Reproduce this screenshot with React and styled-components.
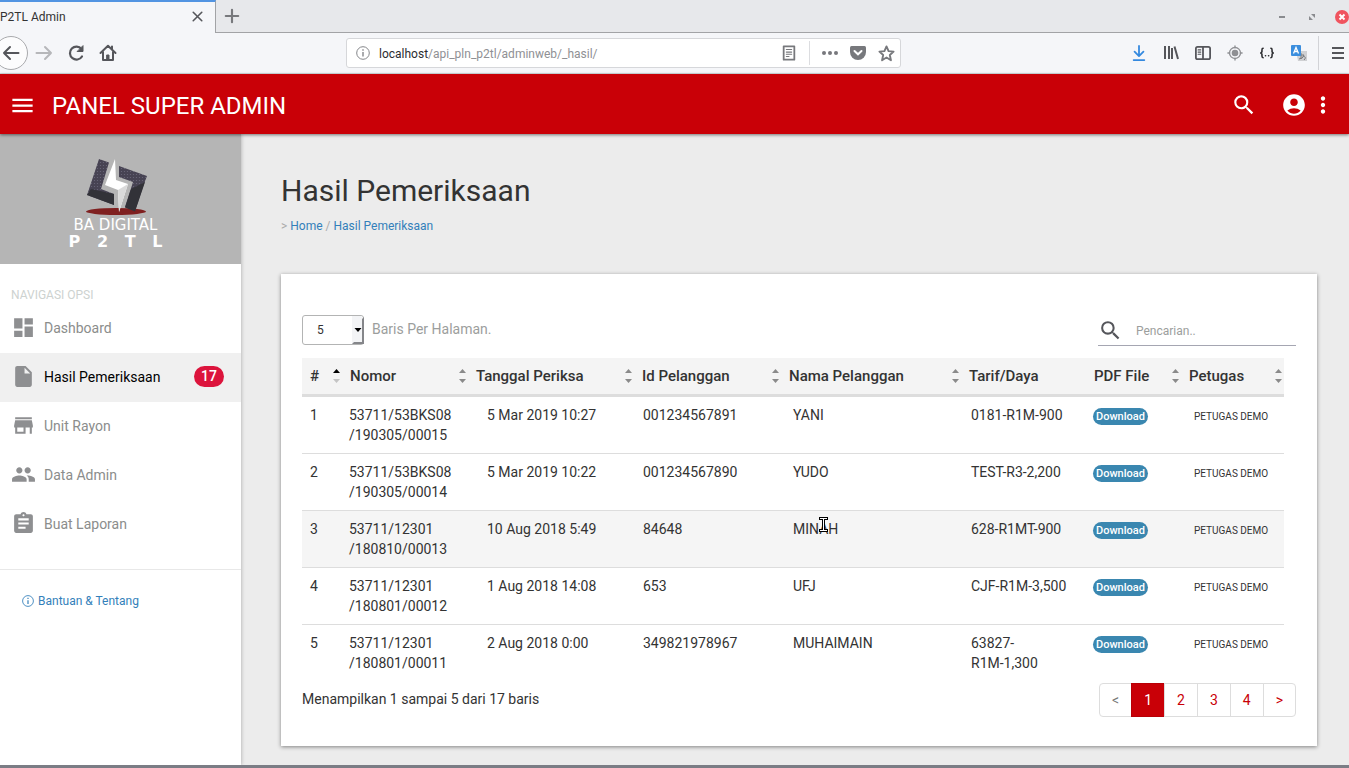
import React from "react";
import styled, { createGlobalStyle } from "styled-components";
import {
  MdMenu,
  MdSearch,
  MdAccountCircle,
  MdMoreVert,
  MdDashboard,
  MdInsertDriveFile,
  MdStore,
  MdPeople,
  MdAssignment,
} from "react-icons/md";

const GlobalStyle = createGlobalStyle`
  *, *::before, *::after { box-sizing: border-box; }
  body {
    margin: 0;
    font-family: Roboto, "Liberation Sans", sans-serif;
    font-size: 14px;
    line-height: 20px;
    color: #333;
    background: #ececec;
  }
  button, input, select { font: inherit; color: inherit; }
  a { color: #337fba; text-decoration: none; }
`;

const Page = styled.div`
  min-height: 100vh;
  display: flex;
  flex-direction: column;
  border-bottom: 3px solid #7b7d85;
  overflow: hidden;
`;

/* ---------- browser window ---------- */

const TabStrip = styled.div`
  display: flex;
  height: 33px;
  background: #e7e8eb;
`;

const Tab = styled.div`
  width: 216px;
  display: flex;
  align-items: center;
  justify-content: space-between;
  padding: 0 9px 2px 0;
  font-size: 12px;
  background: #f5f6f9;
  border-top: 2px solid #5294e2;
  border-right: 1px solid #a2a3a6;
`;

const TabRest = styled.div`
  flex: 1;
  display: flex;
  justify-content: space-between;
  align-items: center;
  border-bottom: 1px solid #a2a3a6;
`;

const WindowButtons = styled.div`
  display: flex;
  align-items: center;
  padding-top: 2px;
`;

const IconButton = styled.button`
  display: flex;
  align-items: center;
  justify-content: center;
  flex: none;
  width: ${(p) => p.$w || 32}px;
  height: ${(p) => p.$h || 32}px;
  padding: 0;
  border: 0;
  background: none;
  color: ${(p) => p.$color || "#55565b"};
  svg { flex: none; }
`;

const CloseWindowButton = styled(IconButton)`
  width: 22px;
  justify-content: flex-end;
`;

const Toolbar = styled.div`
  display: grid;
  grid-template-columns: 346fr 555fr 448fr;
  align-items: center;
  height: 41px;
  background: #f5f6f9;
  border-bottom: 1px solid #d5dde0;
`;

const NavTools = styled.div`
  display: flex;
  align-items: center;
`;

const BackButton = styled(IconButton)`
  width: 34px;
  height: 34px;
  margin-left: -6px;
  border: 1px solid #a9aaad;
  border-radius: 50%;
  background: #fcfcfd;
`;

const ExtraTools = styled.div`
  display: flex;
  align-items: center;
  justify-content: flex-end;
`;

const MenuSlot = styled.div`
  margin-left: 3px;
  padding-left: 7px;
  border-left: 1px solid #d2d3d7;
`;

const UrlBar = styled.div`
  display: flex;
  align-items: center;
  height: 30px;
  background: #fff;
  border: 1px solid #d6d7da;
  border-radius: 3px;
`;

const Address = styled.div`
  flex: 1;
  padding-top: 2px;
  font-size: 12px;
  color: #8f9094;
  strong { font-weight: 400; color: #2b2c30; }
`;

const BarDivider = styled.span`
  width: 1px;
  height: 24px;
  margin: 0 6px 0 5px;
  background: #dcdde0;
`;

/* ---------- application ---------- */

const AppBar = styled.header`
  position: relative;
  z-index: 2;
  display: flex;
  align-items: center;
  height: 60px;
  padding: 2px 16px 0 8px;
  background: #c90007;
  color: #fff;
  box-shadow: 0 1px 3px rgba(0, 0, 0, 0.5);
`;

const AppTitle = styled.div`
  flex: 1;
  margin-left: 16px;
  font-size: 24px;
  line-height: 32px;
  padding-top: 2px;
`;

const Body = styled.div`
  flex: 1;
  display: flex;
`;

const Sidebar = styled.aside`
  width: 241px;
  flex: none;
  background: #fff;
  box-shadow: 0 0 4px rgba(0, 0, 0, 0.3);
`;

const Brand = styled.div`
  display: flex;
  flex-direction: column;
  align-items: center;
  height: 130px;
  padding: 24px 10px 0 0;
  background: #b5b5b5;
  color: #fff;
  svg { display: block; }
`;

const BrandName = styled.div`
  font-family: "DejaVu Sans", sans-serif;
  font-size: 15px;
  line-height: 16px;
`;

const BrandCode = styled.div`
  display: flex;
  justify-content: space-between;
  width: 94px;
  font-family: "DejaVu Sans", sans-serif;
  font-size: 16px;
  font-weight: 700;
  line-height: 18px;
`;

const NavTitle = styled.h2`
  margin: 0;
  padding: 21px 11px 0;
  height: 40px;
  font-size: 12px;
  font-weight: 400;
  line-height: 20px;
  color: #cdd2d0;
`;

const NavList = styled.ul`
  list-style: none;
  margin: 0;
  padding: 0 0 20px;
  border-bottom: 1px solid #e8e8e8;
`;

const NavLink = styled.a`
  display: flex;
  align-items: center;
  height: 49px;
  padding: 0 17px 2px 11px;
  font-size: 14px;
  color: ${(p) => (p.$active ? "#000" : "#8b8d8c")};
  background: ${(p) => (p.$active ? "#f0f0f0" : "transparent")};
  svg { color: #8e8f91; margin-right: 8px; }
`;

const Badge = styled.span`
  margin-left: auto;
  padding: 0 7px;
  border-radius: 11px;
  background: #dc143c;
  color: #fff;
  font-size: 14px;
  font-weight: 500;
  line-height: 21px;
`;

const HelpLink = styled.a`
  display: flex;
  align-items: center;
  gap: 4px;
  padding: 21px 22px;
  font-size: 12px;
`;

const Main = styled.main`
  flex: 1;
  min-width: 0;
  padding: 37px 32px 19px 40px;
`;

const PageTitle = styled.h1`
  margin: 0 0 10px;
  font-size: 30px;
  font-weight: 400;
  line-height: 40px;
`;

const Crumbs = styled.nav`
  margin-bottom: 43px;
  font-size: 12px;
  line-height: 10px;
  color: #aaa;
`;

const Card = styled.section`
  padding: 41px 21px 29px;
  background: #fff;
  box-shadow: 0 1px 4px rgba(0, 0, 0, 0.45);
`;

const Controls = styled.div`
  display: flex;
  justify-content: space-between;
  height: 31px;
  margin-bottom: 12px;
`;

const LengthLabel = styled.label`
  display: flex;
  gap: 8px;
  line-height: 28px;
  color: #9c9e9d;
`;

const SelectBox = styled.span`
  position: relative;
  width: 62px;
  height: 30px;
  svg {
    position: absolute;
    top: 1px;
    right: 0;
    pointer-events: none;
  }
`;

const Select = styled.select`
  appearance: none;
  width: 100%;
  height: 100%;
  padding: 0 14px;
  border: 1px solid #b3b4b4;
  border-radius: 3px;
  background: #fff;
  font-size: 12px;
  color: #333;
`;

const SearchLabel = styled.label`
  display: flex;
  align-items: center;
  width: 198px;
  border-bottom: 1px solid #a5a6b2;
  color: #55565b;
  svg { flex: none; }
`;

const SearchInput = styled.input`
  min-width: 0;
  flex: 1;
  margin-left: 13px;
  padding: 2px 0 0;
  border: 0;
  outline: 0;
  background: none;
  font-size: 12px;
  &::placeholder { color: #9c9e9d; opacity: 1; }
`;

const TableWrap = styled.div`
  padding-right: 12px;
`;

const Table = styled.table`
  width: 100%;
  table-layout: fixed;
  border-collapse: separate;
  border-spacing: 0;
`;

const HeadCell = styled.th`
  padding: 0;
  background: #f4f4f4;
  border-bottom: 2px solid #ddd;
`;

const SortButton = styled.button`
  display: flex;
  align-items: center;
  justify-content: space-between;
  width: 100%;
  height: 36px;
  padding: 0 2px 0 8px;
  border: 0;
  background: none;
  font-size: 15px;
  font-weight: 500;
  white-space: nowrap;
`;

const Row = styled.tr`
  background: ${(p) => (p.$hover ? "#f5f5f5" : "transparent")};
`;

const Cell = styled.td`
  position: relative;
  height: 57px;
  padding: 8px 8px 8px ${(p) => p.$inset}px;
  border-top: 1px solid #ddd;
  vertical-align: top;
  white-space: pre-line;
`;

const Officer = styled.span`
  font-size: 10px;
  white-space: nowrap;
`;

const Download = styled.a`
  display: inline-block;
  margin-top: 3px;
  padding: 0 3px;
  border-radius: 9px;
  background: #3a87b0;
  color: #fff;
  font-size: 11px;
  font-weight: 500;
  line-height: 17px;
`;

const Pointer = styled.svg`
  position: absolute;
  left: 38px;
  top: 5px;
`;

const CardFooter = styled.div`
  display: flex;
  justify-content: space-between;
  margin-top: 2px;
  line-height: 32px;
`;

const Pagination = styled.nav`
  display: flex;
`;

const PageLink = styled.a`
  height: 34px;
  margin-left: -1px;
  padding: 6px 12px;
  line-height: 20px;
  background: ${(p) => (p.$active ? "#c90007" : "#fff")};
  border: 1px solid ${(p) => (p.$active ? "#b80006" : "#ddd")};
  color: ${(p) => (p.$active ? "#fff" : p.$muted ? "#777" : "#c90007")};
  &:first-child { border-radius: 4px 0 0 4px; }
  &:last-child { border-radius: 0 4px 4px 0; }
`;

/* ---------- drawings ---------- */

const Line = ({ size = 18, w = 2, children }) => (
  <svg width={size} height={size} viewBox="0 0 18 18" fill="none" stroke="currentColor" strokeWidth={w} strokeLinecap="round" strokeLinejoin="round">
    {children}
  </svg>
);

const InfoIcon = ({ size = 14 }) => (
  <svg width={size} height={size} viewBox="0 0 14 14" fill="none" stroke="currentColor">
    <circle cx="7" cy="7" r="6.3" />
    <path d="M7 6v4.5" strokeWidth="1.4" />
    <path d="M7 3.2v1.5" strokeWidth="1.4" />
  </svg>
);

const SortIcon = ({ asc }) => (
  <svg width="7" height="14" viewBox="0 0 7 14">
    <path d="M0 4L3.500 0 7 4z" fill={asc ? "#000" : "#8a8a8a"} />
    <path d="M0 10l3.500 4L7 10z" fill={asc ? "#c4c4c4" : "#8a8a8a"} />
  </svg>
);

const Logo = () => (
  <svg width="64" height="59" viewBox="0 0 64 59">
    <defs>
      <pattern id="grain" width="3" height="3" patternUnits="userSpaceOnUse">
        <rect width="3" height="3" fill="#474353" />
        <circle cx="1.5" cy="1.5" r="0.6" fill="#6a6779" />
      </pattern>
    </defs>
    <ellipse cx="32" cy="53.500" rx="30" ry="3.500" fill="#7f2020" />
    <path d="M15 1l10 3.500-8 26.500 13 5v11L3 37z" fill="url(#grain)" />
    <path d="M3 37l4-6 23 5v11z" fill="#323238" />
    <path d="M35 8l28 10-3 8-9 27-10-4 8-25-14-5z" fill="url(#grain)" />
    <path d="M47 31l14-7-10 29.500-10-4z" fill="#323238" />
    <path d="M31 1l1 21 12 4-9 28-1-22-13-5z" fill="#fff" />
    <path d="M34 32l10-6-9 28z" fill="#dadada" />
  </svg>
);

/* ---------- data ---------- */

const columns = [
  { name: "#", width: 40, inset: 8, asc: true },
  { name: "Nomor", width: 126, inset: 7 },
  { name: "Tanggal Periksa", width: 166, inset: 19 },
  { name: "Id Pelanggan", width: 147, inset: 9 },
  { name: "Nama Pelanggan", width: 180, inset: 12 },
  { name: "Tarif/Daya", width: 125, inset: 10, fixed: true },
  { name: "PDF File", width: 95, inset: 7 },
  { name: "Petugas", width: 103, inset: 13 },
];

const rows = [
  ["1", "53711/53BKS08\n/190305/00015", "5 Mar 2019 10:27", "001234567891", "YANI", "0181-R1M-900"],
  ["2", "53711/53BKS08\n/190305/00014", "5 Mar 2019 10:22", "001234567890", "YUDO", "TEST-R3-2,200"],
  ["3", "53711/12301\n/180810/00013", "10 Aug 2018 5:49", "84648", "MINAH", "628-R1MT-900"],
  ["4", "53711/12301\n/180801/00012", "1 Aug 2018 14:08", "653", "UFJ", "CJF-R1M-3,500"],
  ["5", "53711/12301\n/180801/00011", "2 Aug 2018 0:00", "349821978967", "MUHAIMAIN", "63827-\nR1M-1,300"],
];

const navItems = [
  { label: "Dashboard", Icon: MdDashboard },
  { label: "Hasil Pemeriksaan", Icon: MdInsertDriveFile, badge: 17 },
  { label: "Unit Rayon", Icon: MdStore },
  { label: "Data Admin", Icon: MdPeople },
  { label: "Buat Laporan", Icon: MdAssignment },
];

function BrowserChrome() {
  return (
    <>
      <TabStrip>
        <Tab>
          P2TL Admin
          <IconButton $w={18} $h={20} aria-label="Close tab">
            <Line size={11} w={2.6}><path d="M2 2l14 14M16 2L2 16" /></Line>
          </IconButton>
        </Tab>
        <TabRest>
          <IconButton aria-label="New tab" $color="#77787c">
            <Line size={16} w={2.4}><path d="M9 2v14M2 9h14" /></Line>
          </IconButton>
          <WindowButtons>
            <IconButton $w={30} aria-label="Minimize" $color="#8a8b8f">
              <svg width="6" height="2"><path d="M0 0h6v2H0z" fill="currentColor" /></svg>
            </IconButton>
            <IconButton $w={30} aria-label="Restore" $color="#8a8b8f">
              <svg width="6" height="6" viewBox="0 0 6 6" fill="currentColor"><path d="M2 0h4v4zM0 2l4 4H0z" /></svg>
            </IconButton>
            <CloseWindowButton aria-label="Close window">
              <svg width="14" height="14" viewBox="0 0 14 14">
                <circle cx="7" cy="7" r="7" fill="#f0545f" />
                <path d="M4.500 4.500l5 5M9.500 4.500l-5 5" stroke="#fff" strokeWidth="2" />
              </svg>
            </CloseWindowButton>
          </WindowButtons>
        </TabRest>
      </TabStrip>
      <Toolbar>
        <NavTools>
          <BackButton aria-label="Back">
            <Line><path d="M16.500 9H2M8 3L2 9l6 6" /></Line>
          </BackButton>
          <IconButton aria-label="Forward" $color="#b6b7ba">
            <Line><path d="M1.500 9H16M10 3l6 6-6 6" /></Line>
          </IconButton>
          <IconButton aria-label="Reload">
            <Line w={2.2}><path d="M15 12.500A6.500 6.500 0 1 1 14.500 5" /><path d="M16 2v5.500h-5.500z" fill="currentColor" strokeWidth="1" /></Line>
          </IconButton>
          <IconButton aria-label="Home">
            <Line><path d="M1.500 9L9 1.800 16.500 9M4 8v8h10V8M13 2.500V5" /><path d="M8 11h2v5H8z" fill="currentColor" strokeWidth="1" /></Line>
          </IconButton>
        </NavTools>
        <UrlBar>
          <IconButton aria-label="Site information" $color="#85868a"><InfoIcon /></IconButton>
          <Address role="textbox" aria-label="Address" tabIndex={0}>
            <strong>localhost</strong>/api_pln_p2tl/adminweb/_hasil/
          </Address>
          <IconButton $w={30} aria-label="Reader view" $color="#77787c">
            <Line size={16}><path d="M3 1.500h12v15H3z" /><path d="M6 5h6M6 8h6M6 10.500h6M6 13h3" strokeWidth="1.200" /></Line>
          </IconButton>
          <BarDivider />
          <IconButton $w={28} aria-label="Page actions" $color="#77787c">
            <svg width="18" height="6" fill="currentColor"><circle cx="3" cy="3" r="2" /><circle cx="9" cy="3" r="2" /><circle cx="15" cy="3" r="2" /></svg>
          </IconButton>
          <IconButton $w={28} aria-label="Save to Pocket" $color="#77787c">
            <svg width="16" height="16" viewBox="0 0 16 16">
              <path d="M1.500 1h13Q16 1 16 2.500V7a8 8 0 0 1-16 0V2.500Q0 1 1.500 1z" fill="currentColor" />
              <path d="M4.500 6L8 9.300 11.500 6" fill="none" stroke="#fff" strokeWidth="2" strokeLinecap="round" />
            </svg>
          </IconButton>
          <IconButton $w={28} aria-label="Bookmark" $color="#77787c">
            <Line size={17}><path d="M9 1.500l2.200 5 5.300.5-4 3.600 1.200 5.500L9 13.300l-4.700 2.800 1.200-5.500-4-3.600 5.300-.5z" /></Line>
          </IconButton>
        </UrlBar>
        <ExtraTools>
          <IconButton aria-label="Downloads" $color="#3489df">
            <Line size={16}><path d="M9 1v11M4 7.500l5 5 5-5M3 17h12" /></Line>
          </IconButton>
          <IconButton aria-label="Library">
            <svg width="16" height="16" viewBox="0 0 16 16" fill="none" stroke="currentColor" strokeWidth="2">
              <path d="M2 1v13M6 1v13M9 3v11M11.500 1.500L15 14" />
            </svg>
          </IconButton>
          <IconButton aria-label="Sidebar">
            <Line size={16}><path d="M3 2h12q2 0 2 2v10q0 2-2 2H3q-2 0-2-2V4q0-2 2-2zM9 2v14" /><path d="M3.500 5.500h3M3.500 8h3M3.500 10.500h3" strokeWidth="1.200" /></Line>
          </IconButton>
          <IconButton aria-label="Locate" $color="#8f9094">
            <Line size={16} w={1.5}><circle cx="9" cy="9" r="6.200" /><circle cx="9" cy="9" r="3" fill="currentColor" /><path d="M9 1v2M9 15v2M1 9h2M15 9h2" /></Line>
          </IconButton>
          <IconButton aria-label="JSON" $color="#2b2c30">
            <Line size={14} w={2}><path d="M4 3Q2.500 3 2.500 5v2.500L1 9l1.500 1.500V13q0 2 1.500 2M14 3q1.500 0 1.500 2v2.500L17 9l-1.500 1.500V13q0 2-1.500 2M7 12.500h.2M11 12.500h.2" /></Line>
          </IconButton>
          <IconButton aria-label="Translate">
            <svg width="18" height="18" viewBox="0 0 18 18">
              <path d="M6 7h11v10H8z" fill="#cfd0d3" />
              <path d="M8 11h6M11 9v6M9 15q4 0 5-4M13 12q4 1 1 4" stroke="#77787c" fill="none" />
              <rect x="1" y="1" width="10" height="11" rx="1" fill="#3b8ede" />
              <path d="M3.500 9.500L6 3.500l2.500 6M4.500 7.500h3" stroke="#fff" fill="none" strokeWidth="1.300" />
            </svg>
          </IconButton>
          <MenuSlot>
            <IconButton $w={23} $h={34} aria-label="Menu">
              <svg width="12" height="12"><path d="M0 1h12M0 6h12M0 11h12" stroke="currentColor" strokeWidth="2" /></svg>
            </IconButton>
          </MenuSlot>
        </ExtraTools>
      </Toolbar>
    </>
  );
}

function SideNav() {
  return (
    <Sidebar>
      <Brand>
        <Logo />
        <BrandName>BA DIGITAL</BrandName>
        <BrandCode>
          <span>P</span> <span>2</span> <span>T</span> <span>L</span>
        </BrandCode>
      </Brand>
      <NavTitle>NAVIGASI OPSI</NavTitle>
      <NavList>
        {navItems.map(({ label, Icon, badge }) => (
          <li key={label}>
            <NavLink href="#" $active={!!badge}>
              <Icon size={25} />
              {label}
              {badge && <Badge>{badge}</Badge>}
            </NavLink>
          </li>
        ))}
      </NavList>
      <HelpLink href="#">
        <InfoIcon size={12} />
        Bantuan &amp; Tentang
      </HelpLink>
    </Sidebar>
  );
}

function ResultTable() {
  return (
    <TableWrap>
      <Table>
        <colgroup>
          {columns.map((c) => <col key={c.name} width={c.width} />)}
        </colgroup>
        <thead>
          <tr>
            {columns.map((c) => (
              <HeadCell key={c.name} scope="col">
                <SortButton>
                  {c.name}
                  {!c.fixed && <SortIcon asc={c.asc} />}
                </SortButton>
              </HeadCell>
            ))}
          </tr>
        </thead>
        <tbody>
          {rows.map((r) => (
            <Row key={r[0]} $hover={r[0] === "3"}>
              {r.map((value, i) => (
                <Cell key={i} $inset={columns[i].inset}>
                  {value}
                  {value === "MINAH" && (
                    <Pointer width="9" height="17" viewBox="0 0 9 17" fill="none">
                      <path d="M0 2.500h9M0 14.500h9M4.500 2v13" stroke="#000" strokeWidth="3" />
                      <path d="M1 2.500h7M1 14.500h7M4.500 3v11" stroke="#fff" />
                    </Pointer>
                  )}
                </Cell>
              ))}
              <Cell $inset={columns[6].inset}><Download href="#">Download</Download></Cell>
              <Cell $inset={columns[7].inset}><Officer>PETUGAS DEMO</Officer></Cell>
            </Row>
          ))}
        </tbody>
      </Table>
    </TableWrap>
  );
}

export default function App() {
  return (
    <>
      <GlobalStyle />
      <Page>
        <BrowserChrome />
        <AppBar>
          <IconButton $w={28} $color="#fff" aria-label="Toggle navigation"><MdMenu size={27} /></IconButton>
          <AppTitle>PANEL SUPER ADMIN</AppTitle>
          <IconButton $w={60} $color="#fff" aria-label="Search"><MdSearch size={26} /></IconButton>
          <IconButton $w={39} $color="#fff" aria-label="Account"><MdAccountCircle size={26} /></IconButton>
          <IconButton $w={20} $color="#fff" aria-label="More"><MdMoreVert size={26} /></IconButton>
        </AppBar>
        <Body>
          <SideNav />
          <Main>
            <PageTitle>Hasil Pemeriksaan</PageTitle>
            <Crumbs aria-label="Breadcrumb">
              &gt; <a href="#">Home</a> / <a href="#">Hasil Pemeriksaan</a>
            </Crumbs>
            <Card>
              <Controls>
                <LengthLabel>
                  <SelectBox>
                    <Select defaultValue="5">
                      <option>5</option>
                      <option>10</option>
                      <option>25</option>
                    </Select>
                    <svg width="12" height="28" viewBox="0 0 12 28">
                      <path d="M0 0h10v28H0z" fill="#f3f4f6" />
                      <path d="M12 1v27H0l2-2h8V3z" fill="#85868a" />
                      <path d="M2.500 12h7L6 16z" fill="#000" />
                    </svg>
                  </SelectBox>
                  Baris Per Halaman.
                </LengthLabel>
                <SearchLabel>
                  <MdSearch size={25} aria-label="Pencarian" />
                  <SearchInput type="text" placeholder="Pencarian.." />
                </SearchLabel>
              </Controls>
              <ResultTable />
              <CardFooter>
                <span>Menampilkan 1 sampai 5 dari 17 baris</span>
                <Pagination aria-label="Pagination">
                  <PageLink href="#" $muted>&lt;</PageLink>
                  <PageLink href="#" $active aria-current="page">1</PageLink>
                  <PageLink href="#">2</PageLink>
                  <PageLink href="#">3</PageLink>
                  <PageLink href="#">4</PageLink>
                  <PageLink href="#">&gt;</PageLink>
                </Pagination>
              </CardFooter>
            </Card>
          </Main>
        </Body>
      </Page>
    </>
  );
}
